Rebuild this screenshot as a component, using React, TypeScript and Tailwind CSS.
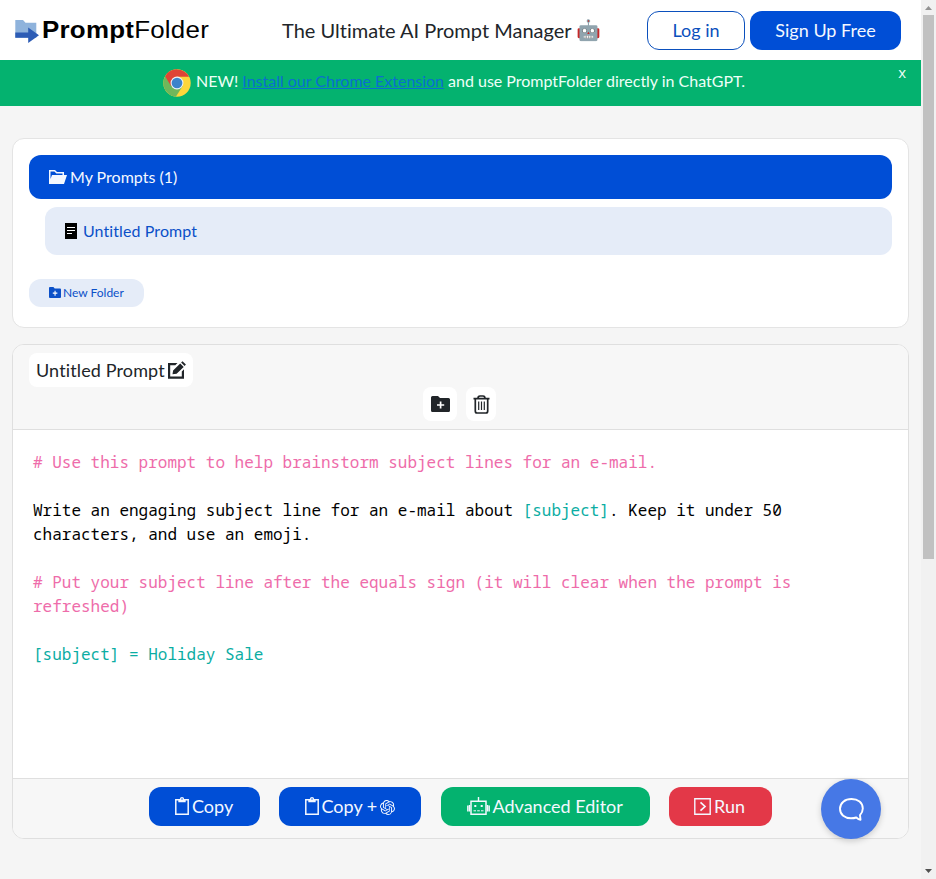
import type { ReactNode } from "react";
import { SiOpenai } from "react-icons/si";

type IconProps = { className?: string };

const LogoMark = () => (
  <svg width="24" height="23" viewBox="0 0 24 23" className="shrink-0">
    <path d="M0.3 0H8l2.5 2.7H21.3V17.7H0.3Z" fill="#8fb3dc" />
    <path d="M0.3 12.6H13.2V7.4L24 15.2L13.2 23V17.7H0.3Z" fill="#2d5cb5" />
  </svg>
);

const Chrome = () => (
  <svg width="28" height="28" viewBox="0 0 48 48" className="shrink-0">
    <circle cx="24" cy="24" r="23.5" fill="#fdd63b" />
    <path d="M3.6 12.3A23.5 23.5 0 0 0 22 47.4L33.5 29.5L24 24Z" fill="#6fb75b" />
    <path d="M24 24L14 29.5L3.6 12.3A23.5 23.5 0 0 1 44.7 13.2H24Z" fill="#df4436" />
    <circle cx="24" cy="24" r="11" fill="#eef3f7" />
    <circle cx="24" cy="24" r="9.2" fill="#3d83cb" />
  </svg>
);

const FolderOpen = ({ className }: IconProps) => (
  <svg width="18" height="14" viewBox="0 0 18 14" fill="currentColor" className={className}>
    <path d="M0 0H6L8 2H15V5H13.5V3.5H7.4L5.4 1.5H1.5V9L3 5H18L15 14H0Z" />
  </svg>
);

const Doc = ({ className }: IconProps) => (
  <svg width="12" height="16" viewBox="0 0 12 16" className={className}>
    <path d="M0 0H12V16H0Z" fill="#000" />
    <path d="M2 4.5H10M2 7.5H10M2 10.5H7" stroke="#fff" />
  </svg>
);

const FolderPlus = ({ className }: IconProps) => (
  <svg viewBox="0 0 19 16" preserveAspectRatio="none" className={className}>
    <path d="M1.5 0H7L9 2H17.5Q19 2 19 3.5V14.5Q19 16 17.5 16H1.5Q0 16 0 14.5V1.5Q0 0 1.5 0Z" fill="currentColor" />
    <path d="M9.6 5.4V12.6M6 9H13.2" stroke="#fff" strokeWidth="1.7" />
  </svg>
);

const Edit = () => (
  <svg width="19" height="18" viewBox="0 0 19 18" fill="currentColor" className="shrink-0">
    <path d="M0 2H9.5L7.3 4.2H2.2V15.5H13.8V10.5L16 8.3V17.7H0Z" />
    <path d="M4.5 13.2L5.1 9.5L12.2 2.4L15.7 5.9L8.6 12.8ZM13.1 1.5L14.5 0.2L17.9 3.6L16.6 5Z" />
  </svg>
);

const Trash = () => (
  <svg width="17" height="19" viewBox="0 0 17 19" fill="none" stroke="currentColor" strokeWidth="1.7">
    <path d="M0.5 3.7H16.5M5 3.5Q5 1 7 1H10Q12 1 12 3.5M2.3 4V16Q2.3 18 4 18H13Q14.7 18 14.7 16V4" />
    <path d="M5.7 6.5V15M8.5 6.5V15M11.3 6.5V15" strokeWidth="1.2" />
  </svg>
);

const Clipboard = () => (
  <svg width="14" height="18" viewBox="0 0 14 18" fill="none" className="shrink-0">
    <path d="M0.8 2.8H13.2V17.2H0.8Z" stroke="currentColor" strokeWidth="1.5" />
    <path d="M3.3 2H4.8Q5 0 7 0Q9 0 9.2 2H10.7V5.2H3.3Z" fill="currentColor" />
    <circle cx="7" cy="2" r="0.7" fill="#004ed6" />
  </svg>
);

const Bot = () => (
  <svg width="23" height="18" viewBox="0 0 23 18" fill="none" stroke="currentColor" className="shrink-0">
    <path d="M4 4.2H19V17.2H4Z" strokeWidth="1.5" />
    <path d="M11.5 0V4M0.8 8.5V14.5M22.2 8.5V14.5M2.5 8V14.5M20.5 8V14.5" strokeWidth="1.4" />
    <path d="M7.3 9H9.3M13.7 9H15.7" strokeWidth="2" />
    <path d="M6.5 13.8H9M10.2 13.8H12.8M14 13.8H16.5" strokeWidth="1" />
  </svg>
);

const RunIcon = () => (
  <svg width="17" height="17" viewBox="0 0 17 17" fill="none" stroke="currentColor" strokeWidth="1.4" className="shrink-0">
    <path d="M0.8 0.8H16.2V16.2H0.8Z" />
    <path d="M6.5 4.3L11 8.5L6.5 12.7" strokeWidth="1.7" />
  </svg>
);

const Action = ({ tone, children }: { tone: string; children: ReactNode }) => (
  <button className={`flex h-[39px] items-center rounded-xl pb-px text-lg whitespace-nowrap text-[#f4f8ff] ${tone}`}>
    {children}
  </button>
);

const Pink = ({ children }: { children: ReactNode }) => <span className="text-[#ee6caa]">{children}</span>;
const Teal = ({ children }: { children: ReactNode }) => <span className="text-[#0bada3]">{children}</span>;

export default function App() {
  return (
    <div className="flex h-[879px] w-[936px] overflow-hidden bg-[#f5f5f5] font-['Lato',sans-serif] text-[#212529] [font-variant-ligatures:none]">
      <div className="relative w-[921px] shrink-0">
        <header className="flex h-[60px] items-center bg-white pl-[15px]">
          <a className="flex w-[267px] items-center gap-[3px]">
            <span className="pt-0.5"><LogoMark /></span>
            <span className="scale-y-[0.93] font-['Liberation_Sans',sans-serif] text-[25.9px] leading-7 tracking-[0.25px] whitespace-nowrap text-black">
              <b>Prompt</b>Folder
            </span>
          </a>
          <div className="flex w-[365px] items-center text-[20px] whitespace-nowrap">
            The Ultimate AI Prompt Manager&nbsp;<span className="font-['Noto_Color_Emoji']">🤖</span>
          </div>
          <button className="h-[39px] w-[98px] rounded-xl border border-[#0b50bd] text-lg text-[#0b50bd]">Log in</button>
          <button className="ml-[5px] h-[39px] w-[151px] rounded-xl bg-[#004ed6] text-lg text-[#f4f8ff]">Sign Up Free</button>
        </header>

        <div className="relative flex h-[46px] items-center bg-[#04b26f] pl-[163px] text-base whitespace-nowrap text-[#eefff8]">
          <Chrome />
          <span className="ml-[5px] pb-[5px] tracking-[-0.015px]">
            NEW! <a className="text-[#0a6ed0] underline">Install our Chrome Extension</a> and use PromptFolder directly in ChatGPT.
          </span>
          <button className="absolute top-0.5 right-[15px] font-['Open_Sans',sans-serif] text-[15px] leading-5">x</button>
        </div>

        <section className="mt-8 ml-3 h-[190px] w-[897px] rounded-xl border border-[#e4e4e4] bg-white p-4">
          <div className="flex h-11 items-center gap-[3px] rounded-xl bg-[#004ed6] pl-5 text-base text-[#f4f8ff]">
            <FolderOpen />
            My Prompts (1)
          </div>
          <div className="mt-2 ml-4 flex h-12 items-center gap-1.5 rounded-xl bg-[#e5ecf8] pl-5 text-base tracking-[0.09px] text-[#0b50c8]">
            <Doc />
            Untitled Prompt
          </div>
          <button className="mt-6 flex h-7 w-[115px] items-center gap-0.5 rounded-xl bg-[#e5ecf8] pl-5 text-xs whitespace-nowrap text-[#0b50c8]">
            <FolderPlus className="mb-px h-[11px] w-3 shrink-0" />
            New Folder
          </button>
        </section>

        <section className="mt-4 ml-3 flex h-[495px] w-[897px] flex-col overflow-hidden rounded-xl border border-[#dfdfdf] bg-white">
          <div className="h-[85px] shrink-0 border-b border-[#dfdfdf] bg-[#f7f7f7] pt-2 pl-4">
            <div className="flex h-[34px] w-[164px] items-center gap-[3px] rounded-lg bg-white pl-[7px] text-lg tracking-[0.13px] whitespace-nowrap">
              Untitled Prompt
              <Edit />
            </div>
            <div className="flex gap-[9px] pl-[394px]">
              <button className="flex h-[34px] w-[34px] items-center justify-center rounded-lg bg-white">
                <FolderPlus className="h-4 w-[19px]" />
              </button>
              <button className="flex h-[34px] w-[30px] items-center justify-center rounded-lg bg-white">
                <Trash />
              </button>
            </div>
          </div>
          <pre className="grow px-5 pt-5 font-['Noto_Sans_Mono','Noto_Sans_Mono_CJK_SC','DejaVu_Sans_Mono',monospace] text-base leading-6 text-black">
            <Pink># Use this prompt to help brainstorm subject lines for an e-mail.</Pink>{"\n\n"}
            Write an engaging subject line for an e-mail about <Teal>[subject]</Teal>. Keep it under 50{"\n"}
            characters, and use an emoji.{"\n\n"}
            <Pink># Put your subject line after the equals sign (it will clear when the prompt is{"\n"}refreshed)</Pink>{"\n\n"}
            <Teal>[subject] = Holiday Sale</Teal>
          </pre>
          <div className="flex h-[60px] shrink-0 border-t border-[#dfdfdf] bg-[#f7f7f7] pt-2 pl-[136px]">
            <Action tone="w-[111px] gap-[3px] bg-[#004ed6] pl-[26px]"><Clipboard />Copy</Action>
            <Action tone="ml-[19px] w-[142px] gap-[3px] bg-[#004ed6] pl-[25.5px]"><Clipboard />Copy +<SiOpenai className="mt-[3px] size-[15px] shrink-0" /></Action>
            <Action tone="ml-5 w-[209px] gap-[3px] bg-[#04b26f] pl-[25.5px]"><Bot />Advanced Editor</Action>
            <Action tone="ml-[19px] w-[103px] gap-[3px] bg-[#e33848] pl-[25px]"><RunIcon />Run</Action>
          </div>
        </section>

        <button className="absolute top-[779px] left-[821px] flex size-[60px] items-center justify-center rounded-full bg-[#4678e6] text-white shadow-[0_2px_6px_rgba(0,0,0,0.18)]">
          <svg width="25" height="23" viewBox="0 0 25 23" fill="none" stroke="currentColor" strokeWidth="1.9" strokeLinejoin="round">
            <path d="M21.5 21.7L21 17.2Q23.8 14 23.8 10.5C23.8 4.5 19 1 12.5 1S1 4.8 1 10.8S5.8 20.3 12 20.3Q15 20.3 17.3 19.5Q19.5 21.5 21.5 21.7Z" />
          </svg>
        </button>
      </div>

      <div className="flex w-[15px] shrink-0 flex-col items-center bg-[#f1f1f1]">
        <svg width="15" height="15" viewBox="0 0 15 15" className="shrink-0"><path d="M7.5 6L11 10H4Z" fill="#929292" /></svg>
        <div className="h-[544px] w-[11px] bg-[#c1c1c1]" />
        <svg width="15" height="15" viewBox="0 0 15 15" className="mt-auto shrink-0"><path d="M7.5 9L11 5H4Z" fill="#505050" /></svg>
      </div>
    </div>
  );
}
